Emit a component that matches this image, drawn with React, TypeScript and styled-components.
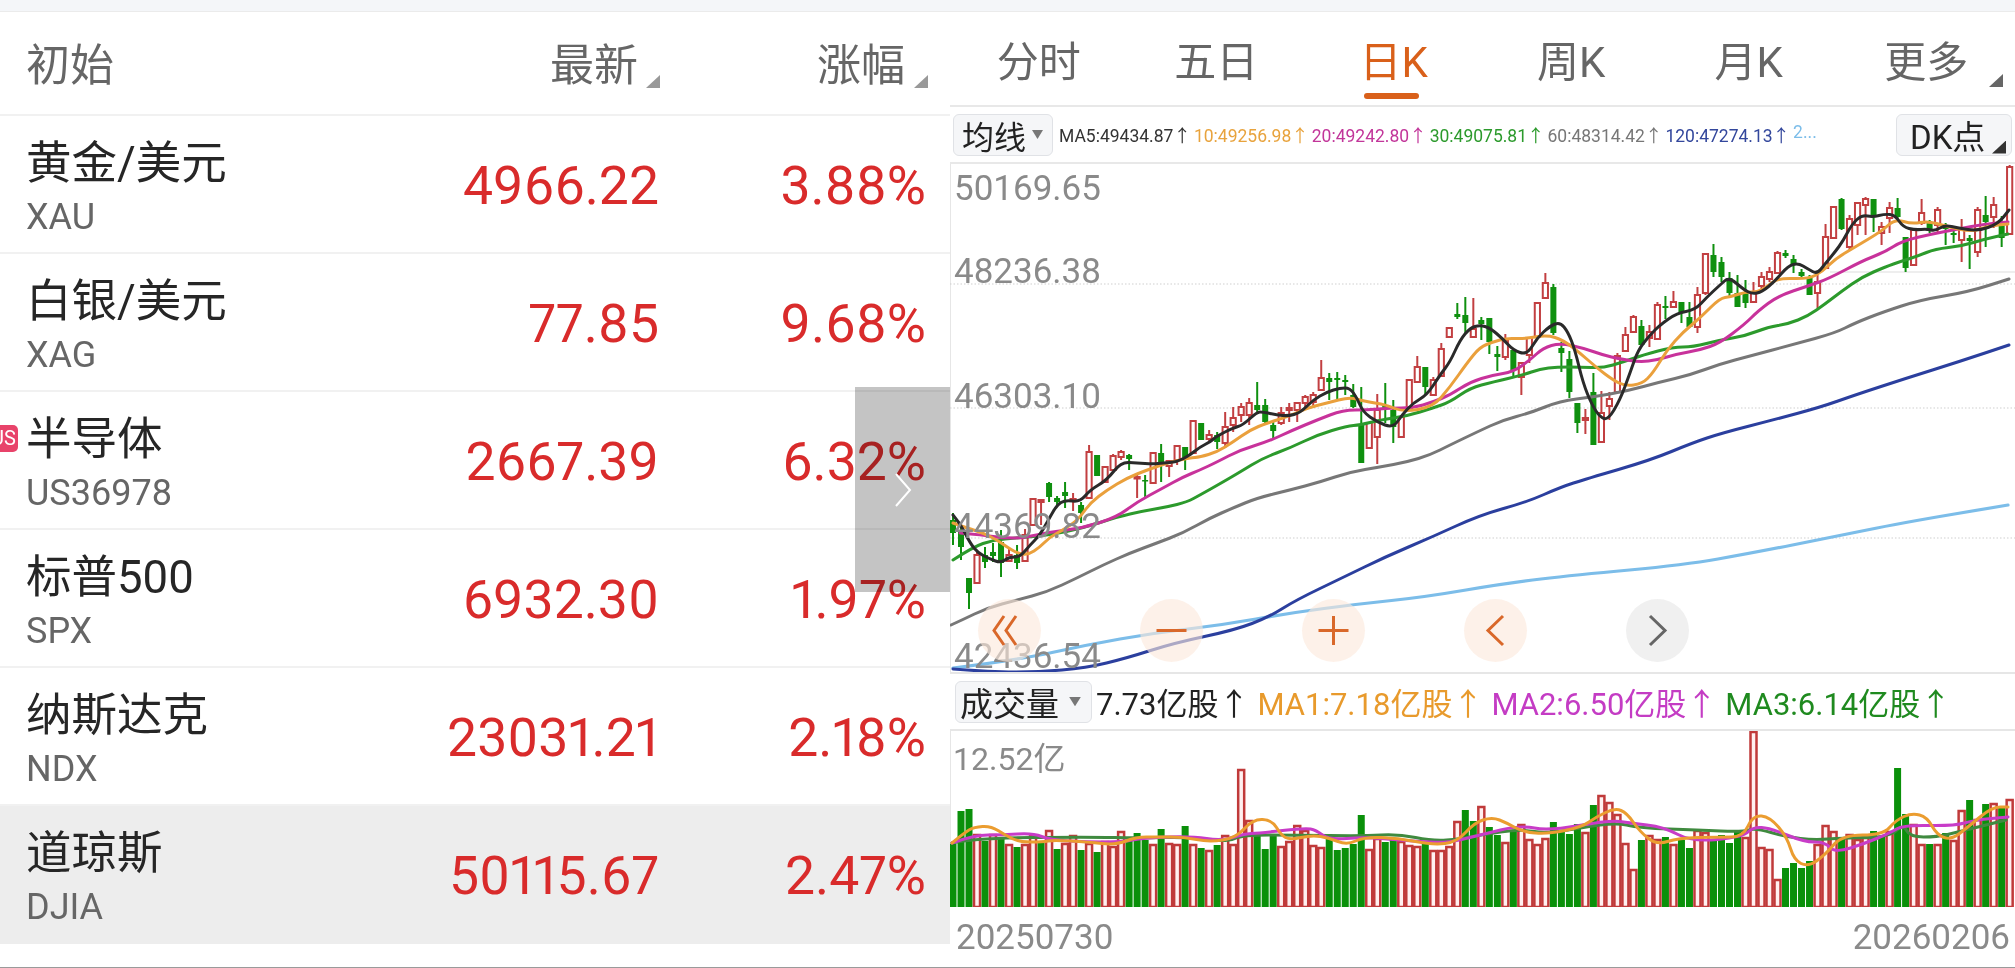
import React from 'react'
import styled, { createGlobalStyle } from 'styled-components'

type Pt = [number, number]
// high, body top, body bottom, low, up (all page pixels)
type Candle = [number, number, number, number, number]

const Stocks = [
  { name: '黄金/美元', code: 'XAU', price: '4966.22', pct: '3.88%' },
  { name: '白银/美元', code: 'XAG', price: '77.85', pct: '9.68%' },
  { name: '半导体', code: 'US36978', price: '2667.39', pct: '6.32%', us: true },
  { name: '标普500', code: 'SPX', price: '6932.30', pct: '1.97%' },
  { name: '纳斯达克', code: 'NDX', price: '23031.21', pct: '2.18%' },
  { name: '道琼斯', code: 'DJIA', price: '50115.67', pct: '2.47%', active: true },
]

const Periods = ['分时', '五日', '日K', '周K', '月K', '更多']

const MaItems = [
  { text: 'MA5:49434.87', color: '#333333' },
  { text: '10:49256.98', color: '#e8a33d' },
  { text: '20:49242.80', color: '#c2369a' },
  { text: '30:49075.81', color: '#2c9a2c' },
  { text: '60:48314.42', color: '#777777' },
  { text: '120:47274.13', color: '#33479c' },
]

const VolItems = [
  { text: '7.73亿股', color: '#222222' },
  { text: 'MA1:7.18亿股', color: '#e89a2c' },
  { text: 'MA2:6.50亿股', color: '#c43cc4' },
  { text: 'MA3:6.14亿股', color: '#1f8a1f' },
]

const PriceLabels = [
  { text: '50169.65', top: 5 },
  { text: '48236.38', top: 88 },
  { text: '46303.10', top: 213 },
  { text: '44369.82', top: 343 },
  { text: '42436.54', top: 473 },
]

const candles: Candle[] = [
  [513,520,533,545,0],[523,530,547,560,0],[578,578,593,609,0],[550,555,583,583,1],[547,555,562,568,0],
  [543,552,556,562,0],[530,542,563,577,0],[548,555,561,561,1],[545,555,563,569,0],[529,535,561,561,1],
  [499,499,525,525,1],[499,500,502,525,1],[482,483,497,502,0],[496,498,502,506,0],[482,492,496,508,0],
  [493,499,501,511,1],[502,505,513,523,0],[445,452,498,498,1],[455,455,476,476,0],[467,467,482,482,1],
  [454,456,470,473,1],[450,452,457,460,1],[454,455,459,470,0],[475,477,478,498,1],[475,480,481,497,0],
  [453,453,483,484,1],[444,453,463,482,0],[460,461,466,477,1],[445,446,460,465,1],[447,447,460,470,0],
  [421,421,453,453,1],[423,423,440,440,0],[430,435,439,442,1],[432,435,442,449,0],[412,427,443,448,1],
  [407,418,425,432,1],[403,407,415,422,1],[398,403,415,425,1],[382,405,410,413,0],[399,405,422,423,0],
  [422,425,431,439,0],[407,413,423,425,1],[403,408,410,422,1],[402,403,410,422,1],[395,397,403,410,1],
  [392,395,402,408,1],[360,378,390,390,1],[373,378,382,400,0],[372,378,380,400,0],[375,380,382,395,0],
  [384,395,407,408,0],[387,425,463,463,0],[423,423,448,448,1],[394,410,437,464,1],[383,405,408,423,0],
  [400,410,427,443,0],[417,417,437,437,1],[380,380,410,410,1],[356,367,382,382,1],[367,367,387,395,0],
  [377,380,395,395,1],[343,349,376,376,1],[328,328,337,337,1],[303,314,317,319,0],[297,315,323,334,0],
  [298,329,337,338,1],[317,320,324,340,0],[318,318,342,354,0],[346,354,357,371,0],[334,340,357,360,1],
  [350,350,370,376,0],[363,363,377,395,1],[337,338,355,363,1],[303,303,337,337,1],[273,283,298,298,1],
  [284,287,333,335,0],[342,348,353,372,0],[351,359,392,398,0],[403,403,423,433,0],[409,418,420,434,1],
  [373,392,445,445,0],[391,413,442,442,1],[392,399,406,420,1],[353,356,392,392,1],[327,335,351,351,1],
  [315,317,332,332,1],[320,326,345,345,0],[325,332,338,347,1],[302,305,339,339,1],[296,306,308,319,0],
  [291,302,307,307,1],[302,302,313,323,0],[302,317,327,328,0],[287,295,327,333,1],[254,254,293,295,1],
  [244,255,272,277,0],[257,262,277,282,0],[272,278,293,297,0],[275,293,307,307,0],[280,293,303,308,0],
  [282,292,302,302,1],[272,277,286,290,1],[267,272,279,282,1],[251,253,273,273,1],[250,253,256,258,0],
  [255,259,265,273,0],[269,272,276,279,0],[275,277,295,295,0],[273,282,293,308,1],[224,237,268,268,1],
  [206,207,238,238,1],[198,199,229,230,0],[215,219,247,250,1],[202,203,225,235,1],[197,199,205,235,1],
  [199,199,217,232,0],[222,227,233,245,1],[202,208,218,233,1],[198,208,217,220,0],[237,237,268,272,0],
  [228,230,265,265,1],[199,213,223,225,1],[220,223,231,233,0],[207,210,225,232,1],[223,227,229,245,0],
  [227,233,235,243,0],[219,228,240,262,1],[235,238,241,269,0],[207,210,252,257,1],[196,215,222,247,0],
  [197,205,217,228,1],[216,225,238,247,0],[165,167,234,235,1],
]

const ma5: Pt[] = [[953,515],[960,523],[970,543],[978,553],[990,559],[1001,563],[1009,557],[1020,557],[1030,545],[1040,535],[1050,517],[1057,505],[1065,500],[1080,502],[1090,490],[1107,480],[1121,462],[1137,463],[1153,464],[1163,463],[1177,462],[1190,455],[1200,447],[1210,442],[1217,436],[1233,428],[1243,425],[1257,412],[1263,412],[1277,415],[1288,416],[1300,413],[1313,400],[1327,392],[1340,388],[1350,388],[1357,398],[1363,412],[1377,422],[1393,428],[1402,415],[1413,403],[1427,395],[1440,375],[1450,362],[1460,340],[1470,328],[1480,325],[1490,328],[1503,339],[1513,350],[1527,355],[1537,338],[1550,326],[1560,322],[1568,332],[1575,350],[1583,383],[1592,405],[1600,417],[1608,420],[1620,400],[1630,373],[1638,350],[1650,335],[1660,325],[1677,313],[1695,310],[1707,297],[1720,285],[1729,277],[1743,289],[1752,294],[1762,292],[1775,281],[1788,266],[1798,263],[1808,269],[1817,274],[1825,264],[1835,252],[1843,241],[1852,224],[1862,215],[1873,217],[1885,214],[1895,215],[1903,227],[1915,230],[1927,229],[1935,231],[1945,225],[1958,228],[1978,231],[1998,224],[2009,210]]
const ma10: Pt[] = [[953,523],[967,528],[983,533],[997,540],[1007,547],[1017,553],[1028,555],[1040,547],[1050,537],[1063,530],[1078,520],[1090,503],[1107,490],[1127,478],[1147,470],[1170,462],[1190,458],[1200,457],[1217,452],[1233,442],[1250,430],[1267,423],[1287,417],[1307,408],[1327,403],[1350,397],[1363,401],[1387,405],[1403,412],[1433,407],[1450,387],[1467,363],[1480,347],[1493,342],[1507,338],[1523,339],[1547,335],[1563,340],[1580,353],[1597,368],[1613,380],[1625,386],[1642,384],[1653,373],[1667,350],[1683,332],[1700,318],[1720,298],[1730,297],[1745,292],[1758,292],[1768,286],[1778,278],[1808,279],[1822,272],[1835,259],[1855,247],[1882,231],[1895,219],[1912,224],[1928,221],[1945,226],[1972,232],[1988,226],[2008,224]]
const ma20: Pt[] = [[960,533],[983,535],[1003,538],[1023,538],[1050,532],[1083,528],[1117,517],[1137,502],[1163,488],[1183,477],[1200,470],[1217,462],[1240,450],[1267,442],[1293,430],[1317,420],[1343,410],[1367,410],[1390,408],[1413,408],[1433,402],[1450,395],[1470,382],[1493,375],[1513,372],[1530,360],[1543,348],[1560,343],[1583,348],[1603,355],[1620,359],[1640,362],[1657,360],[1677,354],[1700,350],[1720,343],[1745,324],[1758,311],[1778,296],[1808,286],[1828,279],[1862,261],[1885,252],[1902,241],[1932,234],[1958,229],[1985,224],[2008,222]]
const ma30: Pt[] = [[953,560],[973,547],[993,540],[1017,538],[1050,535],[1083,528],[1117,517],[1143,511],[1167,507],[1187,502],[1200,495],[1223,482],[1240,472],[1263,458],[1290,448],[1317,435],[1347,426],[1360,425],[1380,420],[1407,416],[1433,408],[1450,402],[1470,388],[1493,382],[1523,375],[1540,369],[1557,367],[1580,367],[1603,368],[1623,362],[1643,355],[1673,347],[1693,347],[1720,340],[1745,336],[1768,327],[1788,324],[1808,316],[1825,304],[1842,291],[1862,277],[1885,267],[1902,261],[1918,256],[1935,249],[1962,246],[1985,239],[2008,234]]
const ma60: Pt[] = [[951,625],[962,620],[987,608],[1017,600],[1047,592],[1077,578],[1103,565],[1130,553],[1157,543],[1183,533],[1210,518],[1233,508],[1257,498],[1290,490],[1320,482],[1350,472],[1380,467],[1407,462],[1430,455],[1450,445],[1477,432],[1503,420],[1530,413],[1560,401],[1593,397],[1627,391],[1660,382],[1690,375],[1720,364],[1750,356],[1795,344],[1835,333],[1855,323],[1883,312],[1920,300],[1968,292],[2009,279]]
const ma120: Pt[] = [[953,669],[991,672],[1038,672],[1086,668],[1127,658],[1174,643],[1235,630],[1269,617],[1296,600],[1344,577],[1385,557],[1432,537],[1480,515],[1527,502],[1561,487],[1586,479],[1651,460],[1692,443],[1722,433],[1773,420],[1821,407],[1855,395],[1907,378],[1958,362],[2009,345]]
const ma250: Pt[] = [[953,668],[1018,660],[1086,645],[1154,633],[1222,625],[1290,613],[1358,604],[1425,597],[1507,583],[1575,575],[1684,565],[1752,553],[1833,537],[1901,523],[2008,505]]

// positive = up day (red outline), negative = down day (solid green)
const volumes = [
  -63,-96,-98,73,-66,73,-68,63,-60,63,72,-64,77,-58,64,72,-57,64,-55,66,61,76,-67,-74,-67,63,-78,64,63,-81,
  63,-59,57,-62,72,63,138,87,-73,-58,-73,61,66,82,77,62,60,-72,-57,-59,-63,-92,58,69,-65,-67,66,62,61,-63,
  57,57,61,86,-97,-86,101,-80,-72,65,-77,83,68,63,69,-85,-77,-73,-83,75,-102,112,105,93,64,38,-67,72,68,-70,
  63,-67,-59,77,75,-68,-72,-64,-75,70,176,60,58,28,-39,-44,-39,-46,63,82,76,-68,73,68,70,-76,-70,76,-139,-93,
  83,63,-63,63,-74,67,97,-107,88,-103,104,-100,108,
]

const volMa1: Pt[] = [[952,843],[964,833],[974,827],[991,826],[1005,835],[1019,842],[1043,842],[1053,840],[1088,842],[1116,845],[1136,837],[1157,837],[1184,837],[1209,842],[1236,838],[1253,819],[1272,820],[1281,835],[1290,840],[1312,835],[1329,838],[1347,845],[1364,837],[1398,838],[1433,845],[1457,842],[1474,823],[1492,817],[1507,823],[1523,832],[1548,834],[1582,827],[1596,817],[1615,808],[1627,813],[1640,832],[1657,845],[1678,838],[1719,837],[1743,837],[1753,815],[1770,817],[1787,837],[1794,860],[1808,867],[1825,855],[1842,835],[1883,835],[1896,820],[1912,813],[1927,817],[1937,835],[1951,840],[1968,827],[1992,807],[2008,807]]
const volMa2: Pt[] = [[952,843],[974,835],[1002,835],[1033,833],[1050,840],[1088,842],[1122,842],[1143,838],[1191,836],[1222,841],[1243,834],[1260,833],[1305,828],[1316,830],[1329,840],[1364,837],[1398,840],[1443,843],[1460,840],[1480,835],[1521,825],[1548,831],[1610,820],[1630,823],[1664,827],[1692,842],[1743,837],[1753,827],[1770,828],[1804,842],[1825,842],[1835,853],[1866,843],[1890,833],[1903,825],[1954,826],[1975,820],[2008,817]]
const volMa3: Pt[] = [[952,843],[974,838],[1088,837],[1140,838],[1191,837],[1226,842],[1243,835],[1295,835],[1364,836],[1398,834],[1433,841],[1460,839],[1480,835],[1521,829],[1548,834],[1613,822],[1640,828],[1698,830],[1743,832],[1755,828],[1787,837],[1814,840],[1842,838],[1890,837],[1903,824],[1910,837],[1937,837],[1958,832],[2006,820]]

const candleX = (i: number) => 953 + i * 8.005

const smooth = (pts: Pt[]) => {
  let d = `M${pts[0][0]} ${pts[0][1]}`
  for (let i = 1; i < pts.length - 1; i++) {
    const mx = (pts[i][0] + pts[i + 1][0]) / 2
    const my = (pts[i][1] + pts[i + 1][1]) / 2
    d += ` Q${pts[i][0]} ${pts[i][1]} ${mx} ${my}`
  }
  const last = pts[pts.length - 1]
  return d + ` L${last[0]} ${last[1]}`
}

const GlobalStyle = createGlobalStyle`
  html, body {
    margin: 0;
    padding: 0;
    background: #ffffff;
  }
  body {
    font-family: Roboto, "Noto Sans CJK SC", sans-serif;
  }
`

const Page = styled.div`
  display: flex;
  width: 2015px;
  height: 968px;
  box-sizing: border-box;
  border-bottom: 1px solid #9a9a9a;
  overflow: hidden;
  font-family: Roboto, "Noto Sans CJK SC", sans-serif;
`

const LeftPanel = styled.div`
  position: relative;
  width: 950px;
  flex: none;
  overflow: hidden;
`

const RightPanel = styled.div`
  width: 1065px;
  flex: none;
  display: flex;
  flex-direction: column;
`

const TopBand = styled.div`
  height: 12px;
  flex: none;
  box-sizing: border-box;
  background: #f4f6f9;
  border-bottom: 1px solid #ebebeb;
`

const ListGrid = styled.div`
  display: grid;
  grid-template-columns: 1fr 266px 267px;
  padding: 0 24px 0 26px;
  box-sizing: border-box;
  border-bottom: 2px solid #f1f1f1;
`

const ListHeader = styled(ListGrid)`
  height: 104px;
  padding-top: 6px;
  align-items: center;
  font-size: 44px;
  line-height: 52px;
  color: #666666;
`

const HeadCell = styled.div`
  position: relative;
  text-align: right;
  padding-right: 21px;
`

const CornerMark = styled.i<{ $right: number; $top: number; $color?: string }>`
  position: absolute;
  right: ${(p) => p.$right}px;
  top: ${(p) => p.$top}px;
  width: 14px;
  height: 13px;
  background: ${(p) => p.$color || '#999999'};
  clip-path: polygon(100% 0, 100% 100%, 0 100%);
`

const Row = styled(ListGrid)<{ $active?: boolean }>`
  position: relative;
  height: 138px;
  background: ${(p) => (p.$active ? '#ededed' : 'transparent')};
  border-bottom-color: ${(p) => (p.$active ? '#ededed' : '#f1f1f1')};
`

const NameCell = styled.div`
  padding-top: 22px;
`

const StockName = styled.div`
  font-size: 45.5px;
  line-height: 52px;
  color: #262626;
`

const StockCode = styled.div`
  margin-top: 7px;
  font-size: 36px;
  line-height: 40px;
  color: #666666;
`

const Quote = styled.div`
  align-self: center;
  text-align: right;
  font-size: 53.5px;
  font-variant-numeric: proportional-nums;
  line-height: 60px;
  color: #d92b2b;
  padding-top: 4px;
`

const UsBadge = styled.span`
  position: absolute;
  left: -11px;
  top: 33px;
  width: 29px;
  height: 27px;
  border-radius: 5px;
  background: #e8436a;
  color: #ffffff;
  font-size: 20px;
  line-height: 27px;
  text-align: center;
`

const ScrollFlap = styled.div`
  position: absolute;
  left: 855px;
  top: 387px;
  width: 95px;
  height: 205px;
  display: flex;
  align-items: center;
  justify-content: center;
  &::before {
    content: '';
    position: absolute;
    inset: 0;
    background: #c4c4c4;
    mix-blend-mode: multiply;
  }
  svg {
    position: relative;
  }
`

const TabBar = styled.div`
  display: grid;
  grid-template-columns: repeat(6, 1fr);
  height: 95px;
  flex: none;
  box-sizing: border-box;
  border-bottom: 2px solid #e8e8e8;
`

const Tab = styled.div<{ $active?: boolean }>`
  position: relative;
  display: flex;
  align-items: center;
  justify-content: center;
  font-size: 42px;
  color: ${(p) => (p.$active ? '#d9601a' : '#666666')};
  ${(p) =>
    p.$active &&
    `&::after {
      content: '';
      position: absolute;
      left: 50%;
      margin-left: -30px;
      bottom: 6px;
      width: 55px;
      height: 6px;
      border-radius: 3px;
      background: #d9601a;
    }`}
`

const MaBar = styled.div`
  display: flex;
  align-items: center;
  height: 57px;
  flex: none;
  box-sizing: border-box;
  padding: 0 3px;
  border-bottom: 2px solid #e8e8e8;
`

const SelectBox = styled.div`
  position: relative;
  display: flex;
  align-items: center;
  box-sizing: border-box;
  background: #f5f6f8;
  border: 1px solid #e0e2e6;
  border-radius: 6px;
  color: #222222;
`

const LineSelect = styled(SelectBox)`
  width: 100px;
  height: 42px;
  padding-left: 8px;
  font-size: 32px;
`

const DownMark = styled.i<{ $size: number }>`
  position: absolute;
  right: ${(p) => p.$size - 2}px;
  top: 50%;
  margin-top: -${(p) => p.$size * 0.4}px;
  width: ${(p) => p.$size}px;
  height: ${(p) => p.$size * 0.8}px;
  background: #777777;
  clip-path: polygon(0 0, 100% 0, 50% 100%);
`

const MaList = styled.div`
  display: flex;
  gap: 3px;
  margin-left: 6px;
  font-size: 17.5px;
`

const MaItem = styled.span<{ $color: string }>`
  color: ${(p) => p.$color};
  white-space: nowrap;
`

const DkButton = styled(SelectBox)`
  width: 116px;
  height: 42px;
  margin-left: auto;
  padding-left: 13px;
  font-size: 33px;
`

const ChartArea = styled.div`
  position: relative;
  height: 508px;
  flex: none;
  svg {
    display: block;
  }
`

const AxisText = styled.span<{ $top: number }>`
  position: absolute;
  left: 4px;
  top: ${(p) => p.$top}px;
  font-size: 35px;
  line-height: 40px;
  color: #8a8a8a;
`

const ZoomButtons = styled.div`
  position: absolute;
  left: 28px;
  top: 435px;
  display: flex;
  gap: 99px;
`

const RoundButton = styled.div<{ $plain?: boolean }>`
  width: 63px;
  height: 63px;
  border-radius: 50%;
  background: ${(p) => (p.$plain ? 'rgba(238,238,238,.9)' : 'rgba(252,232,220,.62)')};
  color: ${(p) => (p.$plain ? '#666666' : '#d9682a')};
  svg {
    display: block;
  }
`

const VolBar = styled.div`
  display: flex;
  align-items: center;
  gap: 8px;
  height: 59px;
  flex: none;
  box-sizing: border-box;
  padding: 0 0 0 5px;
  border-top: 2px solid #e6e6e6;
  border-bottom: 2px solid #e6e6e6;
`

const VolSelect = styled(SelectBox)`
  width: 137px;
  height: 42px;
  margin-right: -4px;
  padding-left: 4px;
  font-size: 33px;
`

const VolText = styled.span<{ $color: string }>`
  color: ${(p) => p.$color};
  font-size: 31px;
  white-space: nowrap;
`

const VolArea = styled.div`
  position: relative;
  height: 176px;
  flex: none;
  svg {
    display: block;
  }
`

const VolLabel = styled.span`
  position: absolute;
  left: 3px;
  top: 9px;
  font-size: 32px;
  line-height: 38px;
  color: #8a8a8a;
`

const DateRow = styled.div`
  display: flex;
  align-items: center;
  justify-content: space-between;
  height: 60px;
  flex: none;
  padding: 0 5px 0 6px;
  font-size: 35px;
  color: #8a8a8a;
`

const Icon: React.FC<{ d: string }> = ({ d }) => (
  <svg width="63" height="63" viewBox="0 0 63 63" fill="none" stroke="currentColor" strokeWidth="3">
    <path d={d} />
  </svg>
)

const MaLine: React.FC<{ pts: Pt[]; color: string; width?: number }> = ({ pts, color, width = 3 }) => (
  <path d={smooth(pts)} fill="none" stroke={color} strokeWidth={width} strokeLinejoin="round" strokeLinecap="round" />
)

const KChart = () => (
  <svg width="1065" height="508" viewBox="950 164 1065 508">
    <line x1="950.5" y1="164" x2="950.5" y2="672" stroke="#e6e6e6" />
    {[284, 408, 538].map((y) => (
      <line key={y} x1="950" y1={y} x2="2015" y2={y} stroke="#cfcfcf" strokeDasharray="1.5 2" />
    ))}
    <line x1="1830" y1="272" x2="2015" y2="272" stroke="#e8e8e8" strokeWidth="1.5" />
    {candles.map(([high, top, bottom, low, up], i) => {
      const x = candleX(i)
      const color = up ? '#c23f41' : '#0f900f'
      return (
        <g key={i}>
          <line x1={x} y1={high} x2={x} y2={low} stroke={color} strokeWidth="2" />
          <rect
            x={up ? x - 2.6 : x - 3}
            y={top}
            width={up ? 5.2 : 6}
            height={Math.max(bottom - top, 1.5)}
            fill={up ? '#ffffff' : color}
            stroke={up ? color : 'none'}
            strokeWidth="2"
          />
        </g>
      )
    })}
    <MaLine pts={ma250} color="#7cbde9" width={3.2} />
    <MaLine pts={ma120} color="#2b3f9e" />
    <MaLine pts={ma60} color="#777777" />
    <MaLine pts={ma30} color="#2c9a2c" />
    <MaLine pts={ma20} color="#c8329b" />
    <MaLine pts={ma10} color="#eaa03c" />
    <MaLine pts={ma5} color="#2a2a2a" />
  </svg>
)

const VolChart = () => (
  <svg width="1065" height="176" viewBox="950 731 1065 176">
    <line x1="950.5" y1="731" x2="950.5" y2="907" stroke="#e6e6e6" />
    {volumes.map((v, i) => {
      const x = candleX(i)
      const h = Math.abs(v)
      return v > 0 ? (
        <rect key={i} x={x - 3} y={907 - h + 1} width="6" height={h - 1} fill="#fff0f0" stroke="#c03a3a" strokeWidth="2.5" />
      ) : (
        <rect key={i} x={x - 3.5} y={907 - h} width="7" height={h} fill="#0a900a" />
      )
    })}
    <MaLine pts={volMa3} color="#3f8a3f" />
    <MaLine pts={volMa2} color="#c83cc8" />
    <MaLine pts={volMa1} color="#eb9d30" />
  </svg>
)

const App: React.FC = () => (
  <Page>
    <GlobalStyle />
    <LeftPanel>
      <TopBand />
      <ListHeader>
        <div>初始</div>
        <HeadCell>
          最新
          <CornerMark $right={-1} $top={35} />
        </HeadCell>
        <HeadCell>
          涨幅
          <CornerMark $right={-2} $top={35} />
        </HeadCell>
      </ListHeader>
      {Stocks.map((s) => (
        <Row key={s.code} $active={s.active}>
          {s.us && <UsBadge>US</UsBadge>}
          <NameCell>
            <StockName>{s.name}</StockName>
            <StockCode>{s.code}</StockCode>
          </NameCell>
          <Quote>{s.price}</Quote>
          <Quote>{s.pct}</Quote>
        </Row>
      ))}
      <ScrollFlap>
        <svg width="20" height="36" viewBox="0 0 20 36" fill="none" stroke="#ffffff" strokeWidth="2">
          <path d="M3 2 L17 18 L3 34" />
        </svg>
      </ScrollFlap>
    </LeftPanel>
    <RightPanel>
      <TopBand />
      <TabBar>
        {Periods.map((p) => (
          <Tab key={p} $active={p === '日K'}>
            {p}
            {p === '更多' && <CornerMark $right={12} $top={62} $color="#666666" />}
          </Tab>
        ))}
      </TabBar>
      <MaBar>
        <LineSelect>
          均线
          <DownMark $size={11} />
        </LineSelect>
        <MaList>
          {MaItems.map((m) => (
            <MaItem key={m.text} $color={m.color}>
              {m.text}↑
            </MaItem>
          ))}
          <MaItem $color="#7cbde9">2...</MaItem>
        </MaList>
        <DkButton>
          DK点
          <CornerMark $right={5} $top={26} $color="#333333" />
        </DkButton>
      </MaBar>
      <ChartArea>
        <KChart />
        {PriceLabels.map((l) => (
          <AxisText key={l.text} $top={l.top}>
            {l.text}
          </AxisText>
        ))}
        <ZoomButtons>
          <RoundButton>
            <Icon d="M26 17 L16 31.5 L26 46 M38 17 L28 31.5 L38 46" />
          </RoundButton>
          <RoundButton>
            <Icon d="M16.5 31.5 H46.5" />
          </RoundButton>
          <RoundButton>
            <Icon d="M16.5 31.5 H46.5 M31.5 17 V46" />
          </RoundButton>
          <RoundButton>
            <Icon d="M39 17 L24 31.5 L39 46" />
          </RoundButton>
          <RoundButton $plain>
            <Icon d="M24 17 L39 31.5 L24 46" />
          </RoundButton>
        </ZoomButtons>
      </ChartArea>
      <VolBar>
        <VolSelect>
          成交量
          <DownMark $size={12} />
        </VolSelect>
        {VolItems.map((v) => (
          <VolText key={v.text} $color={v.color}>
            {v.text}↑
          </VolText>
        ))}
      </VolBar>
      <VolArea>
        <VolChart />
        <VolLabel>12.52亿</VolLabel>
      </VolArea>
      <DateRow>
        <span>20250730</span>
        <span>20260206</span>
      </DateRow>
    </RightPanel>
  </Page>
)

export default App
